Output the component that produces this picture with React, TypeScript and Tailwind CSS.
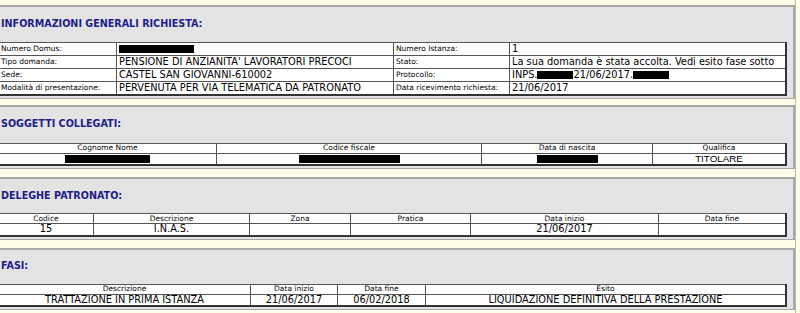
import React from 'react';

// Layout pieces for the request detail page
interface SectionProps {
    title: string;
    head: string;
    className?: string;
    children: React.ReactNode;
}

const Section: React.FC<SectionProps> = ({ title, head, className, children }) => {
    return (
        <div className={`bg-[#e3e3e3] border-t-2 border-r-2 border-b border-[#a8a8a8] pb-[2px] ${className ?? ''}`}>
            <div className={`${head} flex items-center pl-[3px] font-bold text-[9.6px] text-[#1c1c8a]`}>{title}</div>
            {children}
        </div>
    );
};

const Redacted: React.FC<{ w: number }> = ({ w }) => (
    <span className="inline-block align-middle h-[8px] bg-black" style={{ width: w }} />
);

const cell = 'border border-[#555] px-[2px] leading-none';

const GeneralInfo = () => {
    const rows: [string, React.ReactNode, string, React.ReactNode][] = [
        ['Numero Domus:', <Redacted w={75} />, 'Numero Istanza:', '1'],
        ['Tipo domanda:', "PENSIONE DI ANZIANITA' LAVORATORI PRECOCI", 'Stato:', 'La sua domanda è stata accolta. Vedi esito fase sotto'],
        ['Sede:', 'CASTEL SAN GIOVANNI-610002', 'Protocollo:', (
            <span>INPS.<Redacted w={36} />21/06/2017.<Redacted w={36} /></span>
        )],
        ['Modalità di presentazione:', 'PERVENUTA PER VIA TELEMATICA DA PATRONATO', 'Data ricevimento richiesta:', '21/06/2017'],
    ];
    return (
        <table className="w-[789px] border-collapse bg-white border-r-2 border-b-2 border-[#333] table-fixed">
            <colgroup>
                <col className="w-[118px]" />
                <col className="w-[277px]" />
                <col className="w-[116px]" />
                <col />
            </colgroup>
            <tbody>
                {rows.map((r, i) => (
                    <tr key={i} className="h-[13px]">
                        <td className={`${cell} text-[7.5px]`}>{r[0]}</td>
                        <td className={`${cell} text-[9.8px] whitespace-nowrap`}>{r[1]}</td>
                        <td className={`${cell} text-[7.5px] whitespace-nowrap`}>{r[2]}</td>
                        <td className={`${cell} text-[9.8px] whitespace-nowrap`}>{r[3]}</td>
                    </tr>
                ))}
            </tbody>
        </table>
    );
};

interface GridProps {
    widths: number[];
    headers: string[];
    values: React.ReactNode[];
}

const Grid: React.FC<GridProps> = ({ widths, headers, values }) => (
    <table className="w-[789px] border-collapse bg-white border-r-2 border-b-2 border-[#333] table-fixed">
        <colgroup>
            {widths.map((w, i) => (
                <col key={i} style={{ width: w || undefined }} />
            ))}
        </colgroup>
        <thead>
            <tr className="h-[10px]">
                {headers.map((h, i) => (
                    <th key={i} className={`${cell} font-normal text-[7.5px] text-center`}>{h}</th>
                ))}
            </tr>
        </thead>
        <tbody>
            <tr className="h-[12px]">
                {values.map((v, i) => (
                    <td key={i} className={`${cell} text-[9.8px] text-center whitespace-nowrap`}>{v}</td>
                ))}
            </tr>
        </tbody>
    </table>
);

export default function App() {
    return (
        <div className="w-[800px] h-[313px] overflow-hidden bg-[#fefee9] font-['DejaVu_Sans',Verdana,sans-serif] text-black">
            <div className="w-[798px] -ml-[2px] pt-[5px] border-r border-[#b8b8a8] h-full flex flex-col">
                <Section title="INFORMAZIONI GENERALI RICHIESTA:" head="h-[35px]">
                    <GeneralInfo />
                </Section>
                <Section title="SOGGETTI COLLEGATI:" head="h-[36px]" className="mt-[6px]">
                    <Grid
                        widths={[218, 265, 171, 0]}
                        headers={['Cognome Nome', 'Codice fiscale', 'Data di nascita', 'Qualifica']}
                        values={[
                            <Redacted w={85} />,
                            <Redacted w={101} />,
                            <Redacted w={61} />,
                            <span className="font-['Liberation_Sans',Arial,sans-serif]">TITOLARE</span>,
                        ]}
                    />
                </Section>
                <Section title="DELEGHE PATRONATO:" head="h-[34px]" className="mt-[8px]">
                    <Grid
                        widths={[95, 156, 101, 120, 188, 0]}
                        headers={['Codice', 'Descrizione', 'Zona', 'Pratica', 'Data inizio', 'Data fine']}
                        values={['15', 'I.N.A.S.', '', '', '21/06/2017', '']}
                    />
                </Section>
                <Section title="FASI:" head="h-[34px]" className="mt-[8px]">
                    <Grid
                        widths={[252, 87, 88, 0]}
                        headers={['Descrizione', 'Data inizio', 'Data fine', 'Esito']}
                        values={['TRATTAZIONE IN PRIMA ISTANZA', '21/06/2017', '06/02/2018', 'LIQUIDAZIONE DEFINITIVA DELLA PRESTAZIONE']}
                    />
                </Section>
            </div>
        </div>
    );
}
